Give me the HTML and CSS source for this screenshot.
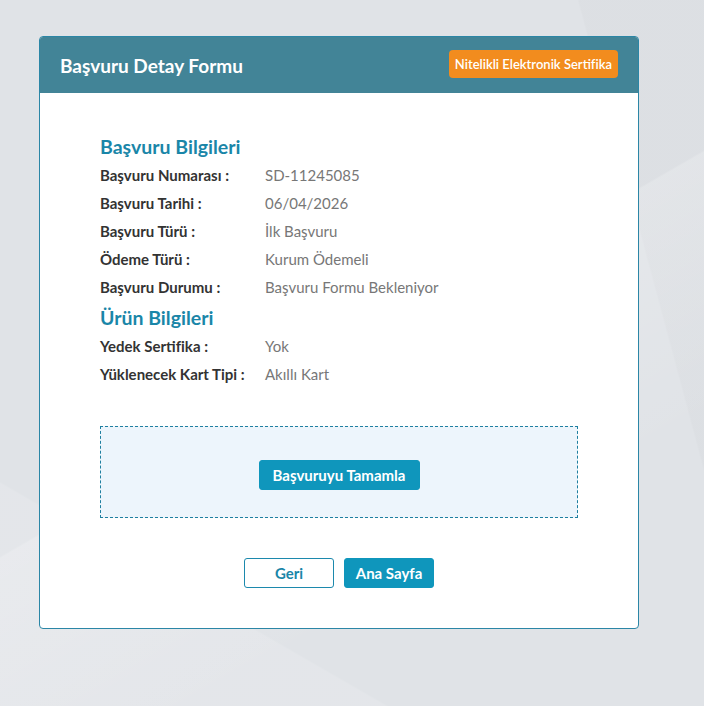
FILE: index.html
```html
<!doctype html>
<html lang="tr">

<head>
  <meta charset="UTF-8" />
  <meta name="viewport" content="width=device-width, initial-scale=1.0" />
  <title>Başvuru Detay Formu</title>
  <link rel="stylesheet" href="styles.css">
</head>

<body>
  <main class="page">
    <div class="card">
      <div class="card-header">
        <h1>Başvuru Detay Formu</h1>
        <span class="badge">Nitelikli Elektronik Sertifika</span>
      </div>

      <div class="card-body">
        <h2>Başvuru Bilgileri</h2>
        <dl class="info-list">
          <dt>Başvuru Numarası :</dt>
          <dd>SD-11245085</dd>
          <dt>Başvuru Tarihi :</dt>
          <dd>06/04/2026</dd>
          <dt>Başvuru Türü :</dt>
          <dd>İlk Başvuru</dd>
          <dt>Ödeme Türü :</dt>
          <dd>Kurum Ödemeli</dd>
          <dt>Başvuru Durumu :</dt>
          <dd>Başvuru Formu Bekleniyor</dd>
        </dl>

        <h2 class="section-next">Ürün Bilgileri</h2>
        <dl class="info-list">
          <dt>Yedek Sertifika :</dt>
          <dd>Yok</dd>
          <dt>Yüklenecek Kart Tipi :</dt>
          <dd>Akıllı Kart</dd>
        </dl>

        <div class="complete-box">
          <button class="btn btn-primary btn-complete">Başvuruyu Tamamla</button>
        </div>

        <div class="actions">
          <button class="btn btn-outline">Geri</button>
          <button class="btn btn-primary">Ana Sayfa</button>
        </div>
      </div>
    </div>
  </main>
</body>

</html>
```

FILE: styles.css
```css
body {
  font-family: Lato, "Open Sans", sans-serif;
  margin: 0;
  padding: 0;
  min-height: 706px;
  background-color: #e0e3e7;
  background-image:
    linear-gradient(150deg, rgba(255, 255, 255, 0) 50%, rgba(255, 255, 255, 0.18) 50.2%, rgba(255, 255, 255, 0) 75%),
    linear-gradient(255deg, rgba(0, 0, 0, 0.015) 14%, rgba(0, 0, 0, 0) 14.2%),
    linear-gradient(30deg, rgba(255, 255, 255, 0.12) 20%, rgba(255, 255, 255, 0) 20.2%);
}

.page {
  padding: 36px 0 0 39px;
}

.card {
  width: 598px;
  background: #ffffff;
  border: 1px solid #2b86a6;
  border-radius: 4px;
  overflow: hidden;
}

.card-header {
  background-color: #428497;
  height: 56px;
  padding: 0 20px;
  display: flex;
  justify-content: space-between;
  align-items: center;
}

.card-header h1 {
  margin: 0;
  color: #ffffff;
  font-size: 19px;
  font-weight: 700;
}

.badge {
  background-color: #f28c1e;
  color: #ffffff;
  font-size: 13px;
  font-weight: 600;
  padding: 0 6px;
  height: 28px;
  line-height: 28px;
  border-radius: 4px;
  margin-top: -2px;
}

.card-body {
  padding: 40px 60px 40px;
}

h2 {
  margin: 0;
  color: #1a86a8;
  font-size: 19.5px;
  font-weight: 700;
  line-height: 28px;
}

h2.section-next {
  margin-top: 3px;
}

.info-list {
  margin: 0;
  display: grid;
  grid-template-columns: 165px 1fr;
  grid-auto-rows: 28px;
  align-items: center;
  font-size: 15px;
}

.info-list dt {
  font-weight: 700;
  color: #333333;
}

.info-list dd {
  margin: 0;
  color: #777777;
}

.complete-box {
  margin-top: 38px;
  height: 90px;
  background-color: #edf5fc;
  border: 1px dashed #1e7fa0;
  display: flex;
  justify-content: center;
  align-items: center;
}

.btn {
  font-family: inherit;
  font-size: 15px;
  font-weight: 700;
  height: 30px;
  border-radius: 3px;
  cursor: pointer;
}

.btn-primary {
  background-color: #0f96bc;
  border: 1px solid #0f96bc;
  color: #ffffff;
}

.btn-outline {
  background-color: #ffffff;
  border: 1px solid #1c89ad;
  color: #1a86a8;
}

.btn-complete {
  width: 161px;
  margin-top: 5px;
}

.actions {
  margin-top: 40px;
  display: flex;
  justify-content: center;
  gap: 10px;
}

.actions .btn {
  width: 90px;
}
```
